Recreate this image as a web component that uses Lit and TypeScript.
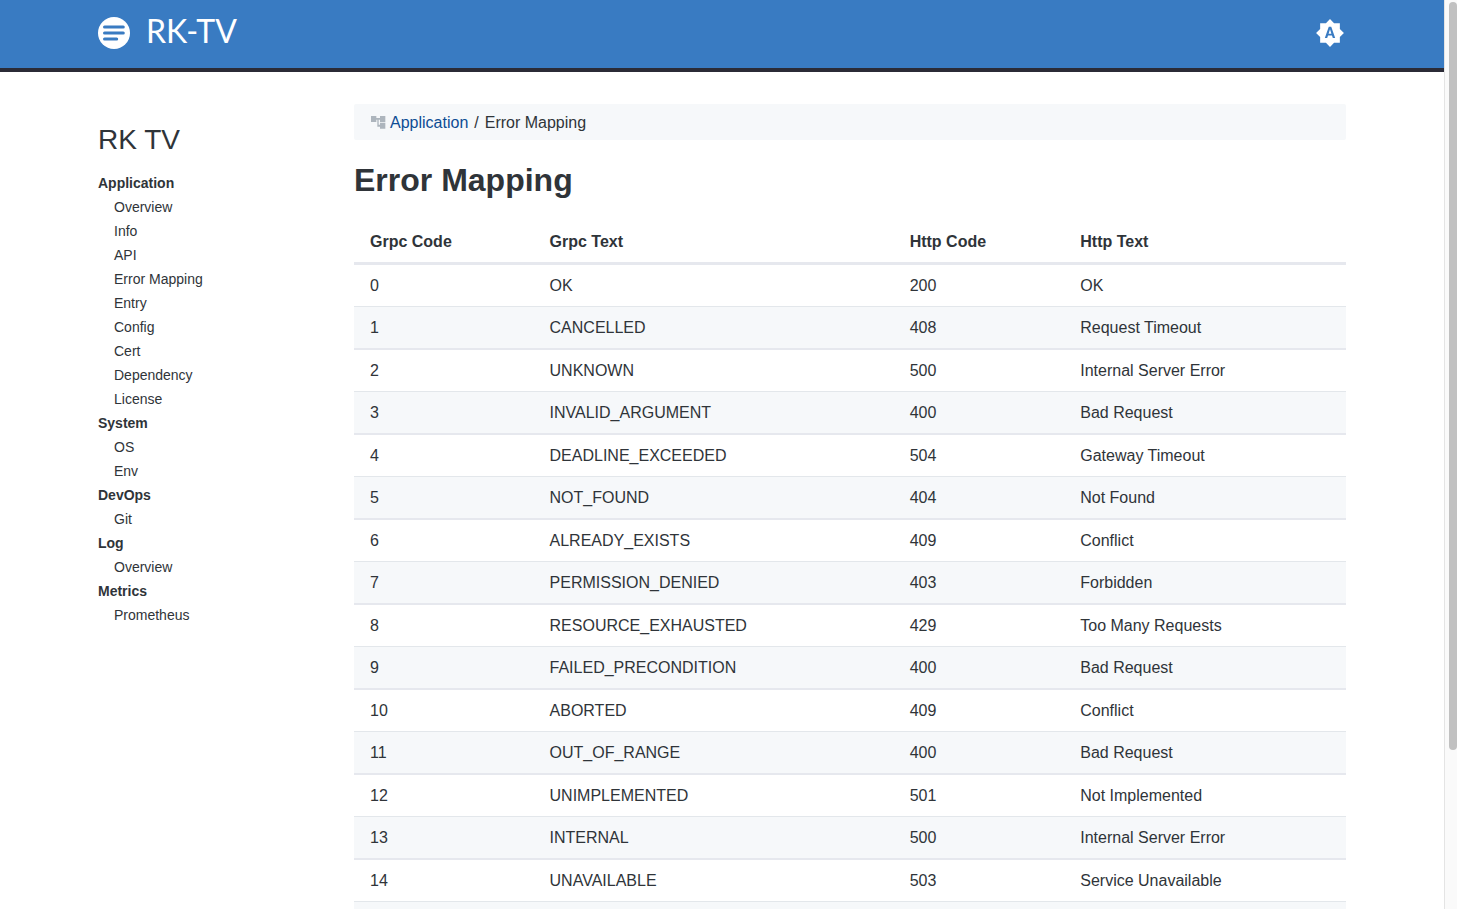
import { LitElement, html, css } from "lit";
import { customElement } from "lit/decorators.js";

interface NavGroup {
  title: string;
  items: string[];
}

const NAV: NavGroup[] = [
  {
    title: "Application",
    items: ["Overview", "Info", "API", "Error Mapping", "Entry", "Config", "Cert", "Dependency", "License"],
  },
  { title: "System", items: ["OS", "Env"] },
  { title: "DevOps", items: ["Git"] },
  { title: "Log", items: ["Overview"] },
  { title: "Metrics", items: ["Prometheus"] },
];

const COLUMNS = ["Grpc Code", "Grpc Text", "Http Code", "Http Text"];

const ROWS: [number, string, number, string][] = [
  [0, "OK", 200, "OK"],
  [1, "CANCELLED", 408, "Request Timeout"],
  [2, "UNKNOWN", 500, "Internal Server Error"],
  [3, "INVALID_ARGUMENT", 400, "Bad Request"],
  [4, "DEADLINE_EXCEEDED", 504, "Gateway Timeout"],
  [5, "NOT_FOUND", 404, "Not Found"],
  [6, "ALREADY_EXISTS", 409, "Conflict"],
  [7, "PERMISSION_DENIED", 403, "Forbidden"],
  [8, "RESOURCE_EXHAUSTED", 429, "Too Many Requests"],
  [9, "FAILED_PRECONDITION", 400, "Bad Request"],
  [10, "ABORTED", 409, "Conflict"],
  [11, "OUT_OF_RANGE", 400, "Bad Request"],
  [12, "UNIMPLEMENTED", 501, "Not Implemented"],
  [13, "INTERNAL", 500, "Internal Server Error"],
  [14, "UNAVAILABLE", 503, "Service Unavailable"],
  [15, "DATA_LOSS", 500, "Internal Server Error"],
  [16, "UNAUTHENTICATED", 401, "Unauthorized"],
];

@customElement("site-header")
class SiteHeader extends LitElement {
  static styles = css`
    :host {
      display: block;
      background: #397bc2;
      border-bottom: 4px solid #2b2b36;
      color: #fff;
    }
    .inner {
      display: flex;
      justify-content: space-between;
      align-items: center;
      box-sizing: border-box;
      max-width: 1280px;
      margin: 0 auto;
      padding: 13px 16px 15px;
    }
    .brand {
      display: flex;
      align-items: center;
      gap: 16px;
      color: inherit;
      text-decoration: none;
    }
    .brand svg {
      width: 32px;
      height: 32px;
    }
    .name {
      padding-bottom: 4px;
      font: 400 32px/36px Lato, sans-serif;
    }
    .theme {
      display: flex;
      padding: 0;
      border: 0;
      background: none;
      color: inherit;
      cursor: pointer;
    }
    .theme svg {
      width: 32px;
      height: 32px;
    }
  `;

  render() {
    return html`
      <div class="inner">
        <a class="brand" href="#">
          <svg viewBox="0 0 32 32" aria-hidden="true">
            <circle cx="16" cy="16" r="16" fill="#fff" />
            <g stroke="#397bc2" stroke-width="3" stroke-linecap="round">
              <path d="M6.5 10H25.3M6.5 16H25.3M6.5 22H18.7" />
            </g>
          </svg>
          <span class="name">RK-TV</span>
        </a>
        <button class="theme" type="button" aria-label="Toggle theme">
          <svg viewBox="-1 -1 26 26" fill="currentColor" aria-hidden="true">
            <path
              d="M10.85 12.65h2.3L12 9l-1.15 3.65zM20 8.69V4h-4.69L12 .69 8.69 4H4v4.69L.69 12 4 15.31V20h4.69L12 23.31 15.31 20H20v-4.69L23.31 12 20 8.69zM14.3 16l-.7-2h-3.2l-.7 2H7.8L11 7h2l3.2 9h-1.9z"
            />
          </svg>
        </button>
      </div>
    `;
  }
}

@customElement("side-nav")
class SideNav extends LitElement {
  static styles = css`
    :host {
      display: block;
      font-size: 14px;
      line-height: 24px;
    }
    .title {
      margin: 0 0 10px;
      font-size: 28px;
      font-weight: 400;
      line-height: 42px;
    }
    .list {
      margin: 0;
      padding: 0;
      list-style: none;
    }
    .sub {
      padding-left: 16px;
    }
    .group {
      font-weight: 700;
    }
    .link {
      color: inherit;
      text-decoration: none;
    }
    .link:hover {
      text-decoration: underline;
    }
  `;

  render() {
    return html`
      <h2 class="title">RK TV</h2>
      <nav aria-label="Sections">
        <ul class="list">
          ${NAV.map(
            (g) => html`
              <li>
                <span class="group">${g.title}</span>
                <ul class="list sub">
                  ${g.items.map((i) => html`<li><a class="link" href="#">${i}</a></li>`)}
                </ul>
              </li>
            `
          )}
        </ul>
      </nav>
    `;
  }
}

@customElement("error-table")
class ErrorTable extends LitElement {
  static styles = css`
    :host {
      display: block;
    }
    .table {
      width: 100%;
      table-layout: fixed;
      border-collapse: separate;
      border-spacing: 0;
      line-height: 25px;
      text-align: left;
    }
    .grpc-code {
      width: 18.1%;
    }
    .grpc-text {
      width: 36.3%;
    }
    .http-code {
      width: 17.2%;
    }
    .head,
    .cell {
      padding: 8px 16px;
    }
    .head {
      border-bottom: 3px solid #e6e8ee;
      font-weight: 700;
    }
    .cell {
      border-bottom: 1px solid #e3e7eb;
    }
    .row:nth-child(even) .cell {
      background: #f6f8fa;
      border-bottom: 2px solid #e6e8ee;
    }
  `;

  render() {
    return html`
      <table class="table">
        <colgroup>
          <col class="grpc-code" />
          <col class="grpc-text" />
          <col class="http-code" />
          <col />
        </colgroup>
        <thead>
          <tr>
            ${COLUMNS.map((c) => html`<th class="head" scope="col">${c}</th>`)}
          </tr>
        </thead>
        <tbody>
          ${ROWS.map((r) => html`<tr class="row">${r.map((v) => html`<td class="cell">${v}</td>`)}</tr>`)}
        </tbody>
      </table>
    `;
  }
}

@customElement("app-root")
class AppRoot extends LitElement {
  static styles = css`
    :host {
      display: grid;
      grid-template-columns: minmax(0, 1fr) 13px;
      height: 100vh;
      background: #fff;
      color: #2f3439;
      font: 16px/24px "Liberation Sans", Arial, sans-serif;
    }
    .view {
      overflow-y: auto;
      scrollbar-width: none;
    }
    .rail {
      box-sizing: border-box;
      border-left: 1px solid #e4e4e4;
      background: #fafafa;
      padding: 2px 0 2px 4px;
    }
    .thumb {
      height: 748px;
      max-height: 83%;
      border-radius: 4px;
      background: #c1c1c1;
    }
    .layout {
      display: grid;
      grid-template-columns: 256px minmax(0, 1fr);
      box-sizing: border-box;
      max-width: 1280px;
      margin: 0 auto;
      padding: 32px 16px;
    }
    .side {
      padding-top: 15px;
    }
    .crumbs {
      display: flex;
      align-items: center;
      gap: 4px;
      padding: 7px 16px 5px;
      border-radius: 2px;
      background: #f6f8fa;
    }
    .crumbs svg {
      width: 16px;
      height: 16px;
      fill: #adb5bd;
    }
    .crumb {
      color: #0d4c94;
      text-decoration: none;
    }
    .slash {
      padding: 0 2px;
    }
    .heading {
      margin: 20px 0;
      font-size: 32px;
      font-weight: 700;
      line-height: 41px;
    }
    @media (max-width: 720px) {
      .layout {
        grid-template-columns: minmax(0, 1fr);
        gap: 24px;
      }
    }
  `;

  render() {
    return html`
      <div class="view">
        <site-header></site-header>
        <div class="layout">
          <side-nav class="side"></side-nav>
          <main>
            <nav class="crumbs" aria-label="Breadcrumb">
              <svg viewBox="0 0 24 24" aria-hidden="true">
                <path d="M23 10.500V1.500h-8v3H9.500V1.500H1.500v9h8V7H11v10.500h4v3h8v-9h-8v3h-2V7h2v3.500z" />
              </svg>
              <a class="crumb" href="#">Application</a>
              <span class="slash">/</span>
              <span>Error Mapping</span>
            </nav>
            <h1 class="heading">Error Mapping</h1>
            <error-table></error-table>
          </main>
        </div>
      </div>
      <div class="rail" aria-hidden="true"><div class="thumb"></div></div>
    `;
  }
}
